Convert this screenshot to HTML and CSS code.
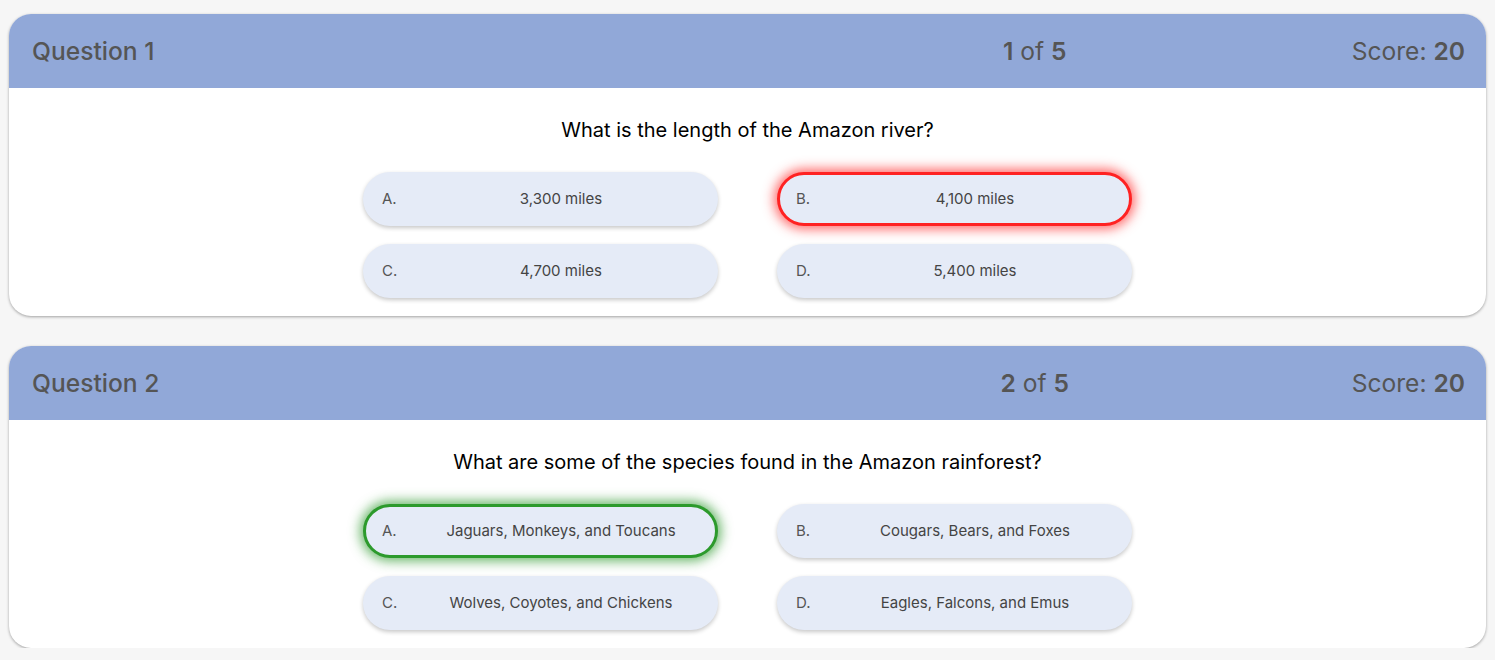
FILE: index.html
```html
<!DOCTYPE html>
<html>
<head>
<meta charset="utf-8">
<link rel="stylesheet" href="styles.css">
</head>
<body>
<main class="quiz">
  <section class="card">
    <header class="card-head">
      <div class="title">Question 1</div>
      <div class="counter"><b>1</b> of <b>5</b></div>
      <div class="score">Score: <b>20</b></div>
    </header>
    <div class="card-body">
      <p class="question">What is the length of the Amazon river?</p>
      <div class="answers">
        <button class="answer"><span class="letter">A.</span><span class="text">3,300 miles</span></button>
        <button class="answer wrong"><span class="letter">B.</span><span class="text">4,100 miles</span></button>
        <button class="answer"><span class="letter">C.</span><span class="text">4,700 miles</span></button>
        <button class="answer"><span class="letter">D.</span><span class="text">5,400 miles</span></button>
      </div>
    </div>
  </section>
  <section class="card">
    <header class="card-head">
      <div class="title">Question 2</div>
      <div class="counter"><b>2</b> of <b>5</b></div>
      <div class="score">Score: <b>20</b></div>
    </header>
    <div class="card-body">
      <p class="question">What are some of the species found in the Amazon rainforest?</p>
      <div class="answers">
        <button class="answer right"><span class="letter">A.</span><span class="text">Jaguars, Monkeys, and Toucans</span></button>
        <button class="answer"><span class="letter">B.</span><span class="text">Cougars, Bears, and Foxes</span></button>
        <button class="answer"><span class="letter">C.</span><span class="text">Wolves, Coyotes, and Chickens</span></button>
        <button class="answer"><span class="letter">D.</span><span class="text">Eagles, Falcons, and Emus</span></button>
      </div>
    </div>
  </section>
</main>
</body>
</html>
```
FILE: styles.css
```css
html, body {
  margin: 0;
  padding: 0;
  background: #f6f6f6;
  font-family: Inter, "Noto Sans", sans-serif;
}
.quiz {
  padding: 14px 9px 0 9px;
  display: flex;
  flex-direction: column;
  gap: 30px;
}
.card {
  background: #fff;
  border-radius: 22px;
  box-shadow: 0 1px 3px rgba(0,0,0,0.35);
  overflow: hidden;
}
.card-head {
  background: #91a8d8;
  height: 74px;
  padding: 0 21px 0 23px;
  display: grid;
  grid-template-columns: 1fr 634px auto;
  align-items: center;
  color: #555;
  font-size: 24.6px;
}
.card-head b { font-weight: 600; }
.title { font-weight: 500; }
.counter { text-align: center; }
.score { text-align: right; }
.card-body {
  padding: 28px 0 18px;
  display: flex;
  flex-direction: column;
  align-items: center;
}
.question {
  margin: 0 0 28px;
  font-size: 20px;
  line-height: 28px;
  color: #000;
}
.answers {
  display: grid;
  grid-template-columns: 355px 355px;
  column-gap: 59px;
  row-gap: 18px;
}
.answer {
  height: 54px;
  border: 2px solid transparent;
  border-radius: 27px;
  background: #e5ebf7;
  box-shadow: 0 2px 4px rgba(0,0,0,0.22);
  display: flex;
  align-items: center;
  padding: 0 18px 2px 17px;
  font-family: Inter, "Noto Sans", sans-serif;
  font-size: 15px;
  color: #444;
  cursor: pointer;
}
.letter {
  width: 42px;
  text-align: left;
  color: #555;
}
.text {
  flex: 1;
  text-align: center;
}
.answer.wrong {
  border: 3px solid #ff2222;
  padding: 0 17px 2px 16px;
  box-shadow: 0 0 12px 3px rgba(255,40,40,0.7);
}
.answer.right {
  border: 3px solid #2c9a2c;
  padding: 0 17px 2px 16px;
  box-shadow: 0 0 12px 3px rgba(40,150,40,0.7);
}
```
